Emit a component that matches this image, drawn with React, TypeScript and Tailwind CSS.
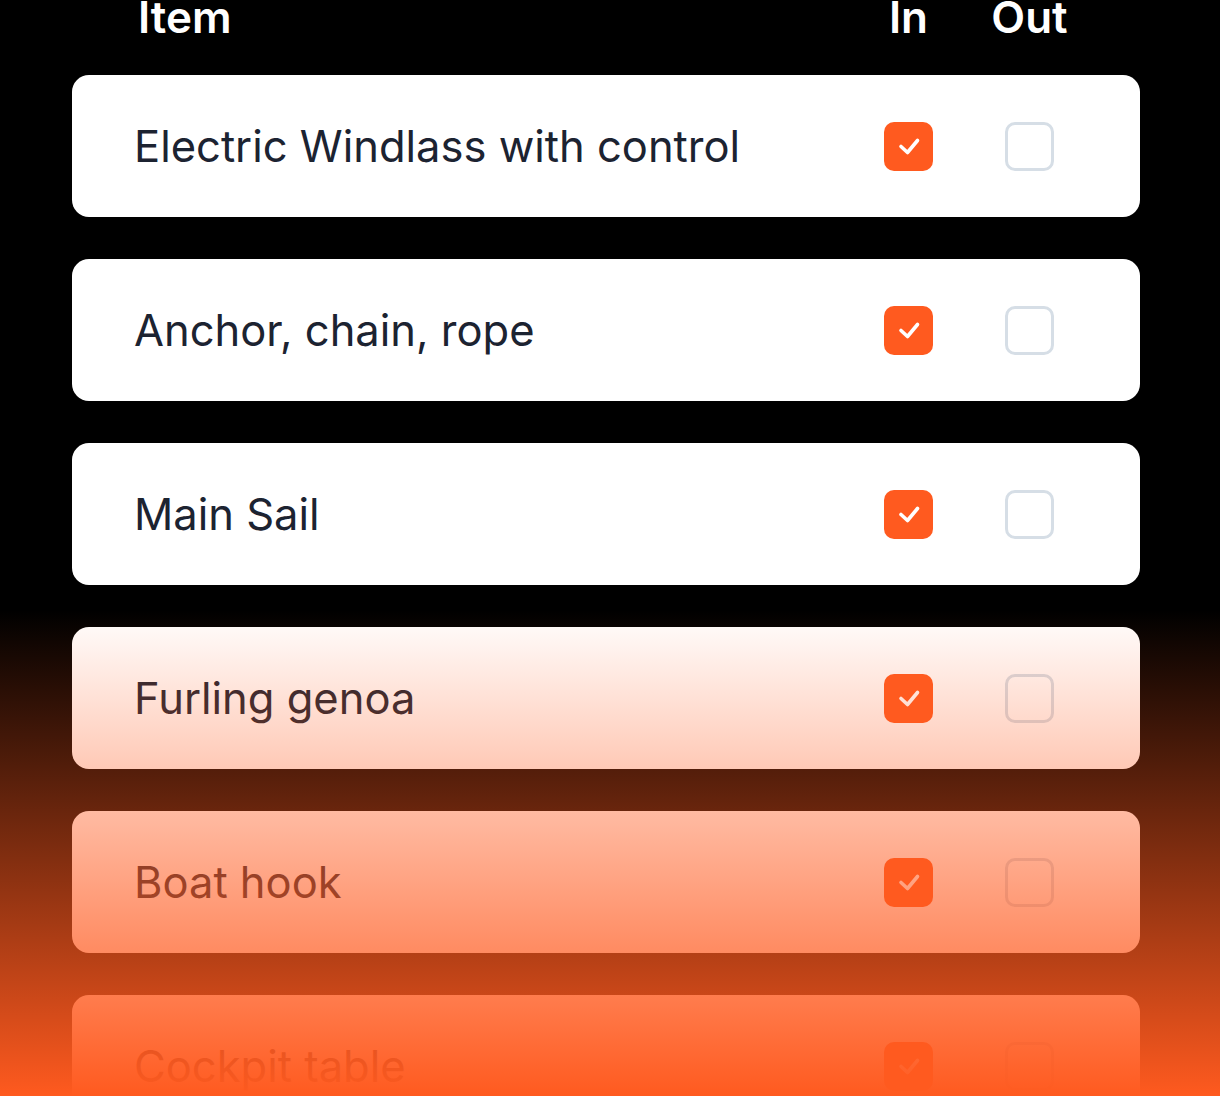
const ITEMS = [
  'Electric Windlass with control',
  'Anchor, chain, rope',
  'Main Sail',
  'Furling genoa',
  'Boat hook',
  'Cockpit table',
];

export default function App() {
  return (
    <div className="relative h-[1096px] w-full overflow-hidden bg-black pl-[72px] pr-[80px]"
         style={{ fontFamily: 'Inter, "Noto Sans", sans-serif' }}>
      {/* Column headers (top is cut off in the view) */}
      <div className="-mt-[5px] flex pl-[66px] pr-[86px] text-[44px] font-semibold leading-[44px] text-white">
        <div className="flex-1">Item</div>
        <div className="flex gap-[72px]">
          <div className="flex w-[49px] justify-center whitespace-nowrap">In</div>
          <div className="flex w-[49px] justify-center whitespace-nowrap">Out</div>
        </div>
      </div>

      {/* Rows */}
      <div className="mt-[36px] flex flex-col gap-[42px]">
        {ITEMS.map(item => (
          <div key={item} className="flex h-[142px] shrink-0 items-center rounded-[17px] bg-white pl-[62px] pr-[86px]">
            <div className="flex-1 pt-[2px] text-[43.5px] leading-none text-[#1c2331]">{item}</div>
            <div className="flex gap-[72px]">
              <div className="flex h-[49px] w-[49px] items-center justify-center rounded-[10px] bg-[#ff5a1f]">
                <svg width="26" height="20" viewBox="0 0 26 20" fill="none" stroke="white" strokeWidth="3.6"
                     strokeLinecap="round" strokeLinejoin="round">
                  <path d="M5 10.5 11.5 16.5 21.5 4.5" />
                </svg>
              </div>
              <div className="h-[49px] w-[49px] rounded-[10px] border-[3px] border-[#d6dee6] bg-white" />
            </div>
          </div>
        ))}
      </div>

      {/* Orange fade overlay */}
      <div className="pointer-events-none absolute inset-x-0 bottom-0 h-[486px] bg-[linear-gradient(to_bottom,rgba(255,90,31,0),#ff5a1f)]" />
    </div>
  );
}
